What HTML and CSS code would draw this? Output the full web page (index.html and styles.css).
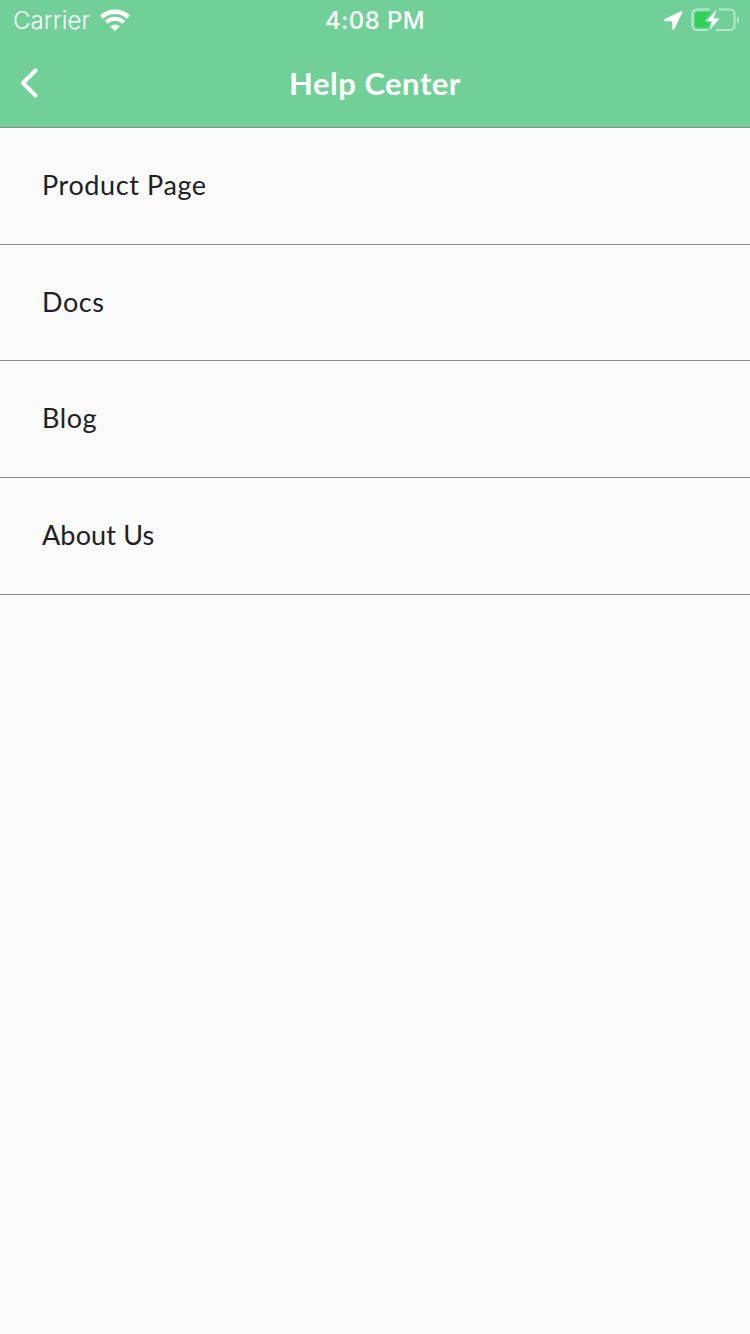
FILE: index.html
```html
<!DOCTYPE html>
<html lang="en">
<head>
<meta charset="utf-8">
<title>Help Center</title>
<link rel="stylesheet" href="styles.css">
</head>
<body>
<header class="header">
  <div class="status">
    <div class="status-left">
      <span class="carrier">Carrier</span>
      <svg class="wifi" width="30" height="23" viewBox="0 0 30 23" fill="none" stroke="#fff">
        <path d="M1.500 8.100C9 .9 21 .9 28.500 8.100" stroke-width="4.400"/>
        <path d="M6.200 13.200C11.200 8.500 18.800 8.500 23.800 13.200" stroke-width="4"/>
        <path d="M15 22.200 10.300 17.500C13 14.800 17 14.800 19.700 17.500Z" fill="#fff" stroke="none"/>
      </svg>
    </div>
    <span class="time">4:08 PM</span>
    <div class="status-right">
      <svg width="19" height="19" viewBox="0 0 19 19"><path d="M17.200.4 1 8.200C-.5 9-.1 10 1 10L8.400 10.100 8.500 17.600C8.600 19 9.700 19 10.300 17.900L18 1.500C18.500.5 18 .1 17.200.4Z" fill="#fff" stroke="#fff" stroke-width=".5"/></svg>
      <svg class="battery" width="48" height="24" viewBox="0 0 48 24" fill="none">
        <path d="M18.500 1.500H6A4.500 4.500 0 0 0 1.500 6V17.500A4.500 4.500 0 0 0 6 22H17M28 1.500H39A4.500 4.500 0 0 1 43.500 6V17.500A4.500 4.500 0 0 1 39 22H25" stroke="#fff" stroke-opacity=".5" stroke-width="2"/>
        <path d="M46 8.500C48.500 9.700 48.500 14.300 46 15.500Z" fill="#fff" fill-opacity=".55"/>
        <path d="M6.500 4H20L14 12.500V14H19L17.500 19.500H6.500A2.500 2.500 0 0 1 4 17V6.500A2.500 2.500 0 0 1 6.500 4Z" fill="#30d158"/>
        <path d="M25.600 1.800 15.300 13.200H20.900L18.500 22.400 28.500 10.600H22.800Z" fill="#fff"/>
      </svg>
    </div>
  </div>
  <div class="nav">
    <svg class="back" width="18" height="30" viewBox="0 0 18 30" fill="none"><path d="M15.500 2.500 3 15 15.500 27.500" stroke="#fff" stroke-width="4" stroke-linecap="round" stroke-linejoin="round"/></svg>
    <h1 class="title">Help Center</h1>
  </div>
</header>
<main class="list">
  <a class="row">Product Page</a>
  <a class="row">Docs</a>
  <a class="row">Blog</a>
  <a class="row about">About Us</a>
</main>
</body>
</html>
```
FILE: styles.css
```css
* { box-sizing: border-box; }
body {
  margin: 0;
  min-height: 1334px;
  background: #fafafa;
  color: #212121;
  font-family: Lato, sans-serif;
}
svg { display: block; }
.header {
  height: 128px;
  background: #70d098;
  border-bottom: 1px solid #8e8e8e;
  color: #fff;
}
.status {
  display: grid;
  grid-template-columns: 1fr auto 1fr;
  height: 40px;
  padding: 1px 11px 0 13px;
  font-family: Inter, sans-serif;
  font-size: 24px;
  line-height: 40px;
}
.status-left { display: flex; gap: 9px; }
.carrier {
  width: 78px;
  font-weight: 300;
  letter-spacing: .1px;
  white-space: nowrap;
}
.wifi { margin-top: 8px; }
.time {
  margin-left: -2px;
  font-weight: 500;
  letter-spacing: .4px;
}
.status-right {
  display: flex;
  justify-content: flex-end;
  gap: 8px;
  padding-top: 10px;
}
.battery { margin-top: -3px; }
.nav {
  display: grid;
  grid-template-columns: 18px 1fr 18px;
  align-items: center;
  height: 87px;
  padding: 0 20px 2px;
}
.title {
  margin: 0;
  font-size: 31px;
  font-weight: 700;
  line-height: 40px;
  text-align: center;
  letter-spacing: .5px;
}
.row {
  display: flex;
  align-items: center;
  height: 117px;
  padding: 0 42px 2px;
  border-bottom: 1px solid #8e8e8e;
  font-size: 27px;
  line-height: 36px;
  letter-spacing: .6px;
}
.row:nth-child(2) { height: 116px; }
.about { letter-spacing: .15px; }
```
